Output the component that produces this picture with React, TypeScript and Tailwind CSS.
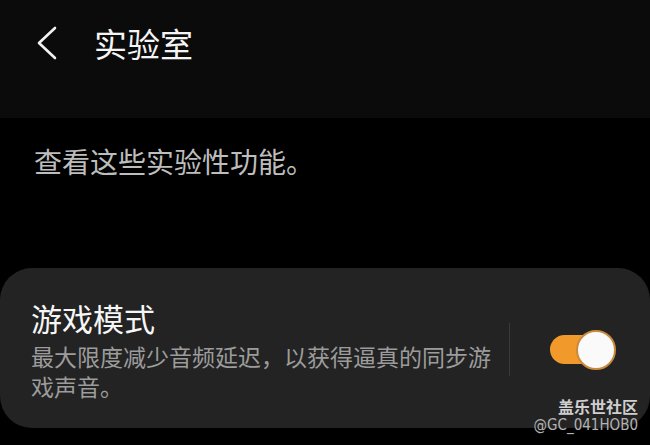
const CJK = { fontFamily: '"Noto Sans CJK SC", "Noto Sans", sans-serif' };

function BackChevron() {
    return (
        <svg width="22" height="34" viewBox="0 0 22 34" fill="none" className="shrink-0">
            <path d="M19 2 L3 17 L19 32" stroke="#f2f2f2" strokeWidth="2.6" strokeLinecap="round" strokeLinejoin="round" />
        </svg>
    );
}

function Toggle({ on }: { on: boolean }) {
    return (
        <div className="relative h-[40px] w-[68px] shrink-0">
            <div className={`absolute left-[2px] top-[5px] h-[29px] w-[60px] rounded-full ${on ? "bg-[#f19a2b]" : "bg-[#555]"}`} />
            <div className="absolute right-0 top-0 h-[40px] w-[40px] rounded-full border-2 border-[#c98a3c] bg-[#fafafa]" />
        </div>
    );
}

export default function App() {
    return (
        <div className="relative h-[445px] w-[650px] overflow-hidden bg-black" style={CJK}>
            <header className="h-[118px] bg-[#0b0b0b]">
                <div className="flex h-[86px] items-center pl-[36px]">
                    <BackChevron />
                    <h1 className="ml-[36px] text-[33px] leading-none text-[#f4f4f4]">实验室</h1>
                </div>
            </header>

            <p className="mt-[24px] px-[34px] text-[28px] leading-[38px] text-[#bdbdbd]">查看这些实验性功能。</p>

            <section className="mt-[88px] h-[160px] rounded-[32px] bg-[#232323] pl-[31px] pt-[30px]">
                <div className="flex items-center">
                    <div className="w-[466px]">
                        <div className="text-[31px] leading-[40px] text-[#f6f6f6]">游戏模式</div>
                        <div className="mt-[3px] text-[23px] leading-[30px] text-[#9c9c9c]">
                            最大限度减少音频延迟，以获得逼真的同步游戏声音。
                        </div>
                    </div>
                    <div className="ml-[12px] h-[53px] w-px bg-[#3a3a3a]" />
                    <div className="ml-[38px]">
                        <Toggle on />
                    </div>
                </div>
            </section>

            <div className="absolute bottom-[11px] right-[12px] flex flex-col items-end">
                <span className="text-[16px] font-bold leading-[20px] text-[#cfcfcf]">盖乐世社区</span>
                <span className="text-[15px] leading-[18px] text-[#b3b3b3]" style={{ fontFamily: '"DejaVu Sans Condensed", "DejaVu Sans", sans-serif', fontStretch: "condensed" }}>
                    @GC_041HOB0
                </span>
            </div>
        </div>
    );
}
